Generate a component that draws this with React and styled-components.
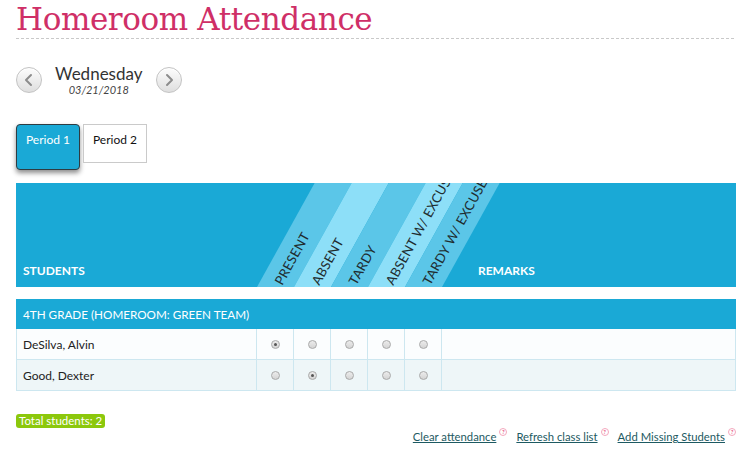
import React from 'react';
import styled, { createGlobalStyle } from 'styled-components';

const GlobalStyle = createGlobalStyle`
  body {
    margin: 0;
    background: #fff;
    font-family: Lato, "Open Sans", sans-serif;
    color: #222;
  }
`;

const Page = styled.div`
  padding: 0 11px 0 16px;
`;

const Title = styled.h1`
  margin: 0;
  padding-bottom: 1px;
  font-family: "DejaVu Serif", serif;
  font-weight: normal;
  font-size: 31px;
  line-height: 38px;
  letter-spacing: -0.4px;
  color: #cf2f67;
  white-space: nowrap;
  background-image: linear-gradient(to right, #c9c9c9 60%, transparent 0);
  background-size: 5px 1px;
  background-repeat: repeat-x;
  background-position: left bottom;
`;

const DayNav = styled.div`
  display: flex;
  align-items: center;
  gap: 12px;
  margin-top: 26px;
`;

const ArrowButton = styled.button`
  width: 26px;
  height: 26px;
  padding: 0;
  border-radius: 50%;
  border: 1px solid #c3c3c3;
  background: linear-gradient(#fdfdfd, #dedede);
  box-shadow: inset 0 1px 0 #fff;
  display: flex;
  align-items: center;
  justify-content: center;
  cursor: pointer;
`;

const DateBlock = styled.div`
  text-align: center;
  padding: 0 1px;
`;

const DayName = styled.div`
  font-size: 17px;
  line-height: 17px;
  color: #333;
`;

const DateText = styled.div`
  margin-top: 2px;
  font-size: 11px;
  line-height: 11px;
  font-style: italic;
  color: #444;
`;

const TabRow = styled.div`
  display: flex;
  align-items: flex-start;
  gap: 3px;
  margin-top: 29px;
`;

const Tab = styled.div`
  width: 64px;
  box-sizing: border-box;
  height: ${({ $active }) => ($active ? '46px' : '39px')};
  padding-top: 7px;
  text-align: center;
  font-size: 12px;
  color: ${({ $active }) => ($active ? '#fff' : '#111')};
  background: ${({ $active }) => ($active ? '#1aa9d6' : '#fff')};
  border: 1px solid ${({ $active }) => ($active ? '#2f3c42' : '#cacaca')};
  border-radius: ${({ $active }) => ($active ? '4px' : '0')};
  box-shadow: ${({ $active }) => ($active ? '0 3px 5px rgba(0,0,0,0.45)' : 'none')};
`;

const HeaderBar = styled.div`
  display: flex;
  height: 104px;
  margin-top: 13px;
  background: #1aa9d6;
  overflow: hidden;
`;

const HeadCell = styled.div`
  display: flex;
  align-items: flex-end;
  box-sizing: border-box;
  padding: 0 0 9px ${({ $pad }) => $pad};
  width: ${({ $width }) => $width || 'auto'};
  flex: ${({ $width }) => ($width ? 'none' : '1')};
  font-size: 12px;
  font-weight: bold;
  line-height: 14px;
  color: #fff;
`;

const StripeCell = styled.div`
  position: relative;
  flex: none;
  width: 37px;
  &::before {
    content: '';
    position: absolute;
    inset: 0;
    background: ${({ $light }) => ($light ? '#8ddff8' : '#5bc6e8')};
    transform: skewX(-29deg);
    transform-origin: bottom left;
  }
`;

const StripeLabel = styled.span`
  position: absolute;
  left: 27px;
  bottom: 0;
  z-index: 1;
  transform-origin: 0 100%;
  transform: rotate(-61deg);
  white-space: nowrap;
  font-size: 13px;
  line-height: 13px;
  letter-spacing: 0.3px;
  color: #1f2c2f;
`;

const GroupRow = styled.div`
  display: flex;
  align-items: center;
  height: 30px;
  margin-top: 12px;
  padding-left: 7px;
  background: #1aa9d6;
  color: #fff;
  font-size: 11.7px;
`;

const StudentRow = styled.div`
  display: flex;
  height: 31px;
  box-sizing: border-box;
  background: ${({ $alt }) => ($alt ? '#eef6f8' : '#fbfdfe')};
  border: 1px solid #cde7f0;
  border-top: none;
`;

const NameCell = styled.div`
  display: flex;
  align-items: center;
  width: 240px;
  flex: none;
  box-sizing: border-box;
  padding-left: 6px;
  font-size: 12px;
  color: #222;
  border-right: 1px solid #cde7f0;
`;

const RadioCell = styled.div`
  display: flex;
  align-items: center;
  justify-content: center;
  width: 37px;
  flex: none;
  box-sizing: border-box;
  border-right: 1px solid #cde7f0;
`;

const RemarksCell = styled.div`
  flex: 1;
`;

const Radio = styled.span`
  position: relative;
  width: 9px;
  height: 9px;
  box-sizing: border-box;
  border-radius: 50%;
  border: 1px solid #a9a9a9;
  background: linear-gradient(#ececec, #d4d4d4);
  &::after {
    content: '';
    display: ${({ $checked }) => ($checked ? 'block' : 'none')};
    position: absolute;
    left: 2px;
    top: 2px;
    width: 3px;
    height: 3px;
    border-radius: 50%;
    background: #555;
  }
`;

const Badge = styled.div`
  display: inline-block;
  margin-top: 23px;
  padding: 0 3px;
  font-size: 11.5px;
  line-height: 14px;
  color: #fff;
  background: #8cc80c;
  border-radius: 3px;
`;

const LinkRow = styled.div`
  display: flex;
  justify-content: flex-end;
  gap: 9px;
  font-size: 11.3px;
  line-height: 16px;
`;

const ActionLink = styled.a`
  color: #1d5a62;
  text-decoration: underline;
  white-space: nowrap;
  cursor: pointer;
`;

const Help = styled.span`
  display: inline-block;
  width: 6px;
  height: 6px;
  margin-left: 3px;
  vertical-align: 7px;
  border: 1px solid #f4a7bd;
  border-radius: 50%;
  font-size: 6px;
  line-height: 6px;
  text-align: center;
  color: #e0245e;
`;

const Chevron = ({ dir }) => (
  <svg width="12" height="14" viewBox="0 0 12 14">
    <path
      d={dir === 'left' ? 'M8 2 L3 7 L8 12' : 'M4 2 L9 7 L4 12'}
      fill="none"
      stroke="#8c8c8c"
      strokeWidth="2"
      strokeLinecap="round"
      strokeLinejoin="round"
    />
  </svg>
);

const columns = ['PRESENT', 'ABSENT', 'TARDY', 'ABSENT W/ EXCUSE', 'TARDY W/ EXCUSE'];

const students = [
  { name: 'DeSilva, Alvin', status: 0 },
  { name: 'Good, Dexter', status: 1 },
];

export default function App() {
  return (
    <Page>
      <GlobalStyle />
      <Title>Homeroom Attendance</Title>

      <DayNav>
        <ArrowButton aria-label="Previous day"><Chevron dir="left" /></ArrowButton>
        <DateBlock>
          <DayName>Wednesday</DayName>
          <DateText>03/21/2018</DateText>
        </DateBlock>
        <ArrowButton aria-label="Next day"><Chevron dir="right" /></ArrowButton>
      </DayNav>

      <TabRow>
        <Tab $active>Period 1</Tab>
        <Tab>Period 2</Tab>
      </TabRow>

      <HeaderBar>
        <HeadCell $width="241px" $pad="7px">STUDENTS</HeadCell>
        {columns.map((c, i) => (
          <StripeCell key={c} $light={i % 2 === 1}>
            <StripeLabel>{c}</StripeLabel>
          </StripeCell>
        ))}
        <HeadCell $pad="36px">REMARKS</HeadCell>
      </HeaderBar>

      <GroupRow>4TH GRADE (HOMEROOM: GREEN TEAM)</GroupRow>
      {students.map((s, r) => (
        <StudentRow key={s.name} $alt={r % 2 === 1}>
          <NameCell>{s.name}</NameCell>
          {columns.map((c, i) => (
            <RadioCell key={c}>
              <Radio $checked={s.status === i} />
            </RadioCell>
          ))}
          <RemarksCell />
        </StudentRow>
      ))}

      <Badge>Total students: 2</Badge>

      <LinkRow>
        <span><ActionLink>Clear attendance</ActionLink><Help>?</Help></span>
        <span><ActionLink>Refresh class list</ActionLink><Help>?</Help></span>
        <span><ActionLink>Add Missing Students</ActionLink><Help>?</Help></span>
      </LinkRow>
    </Page>
  );
}
